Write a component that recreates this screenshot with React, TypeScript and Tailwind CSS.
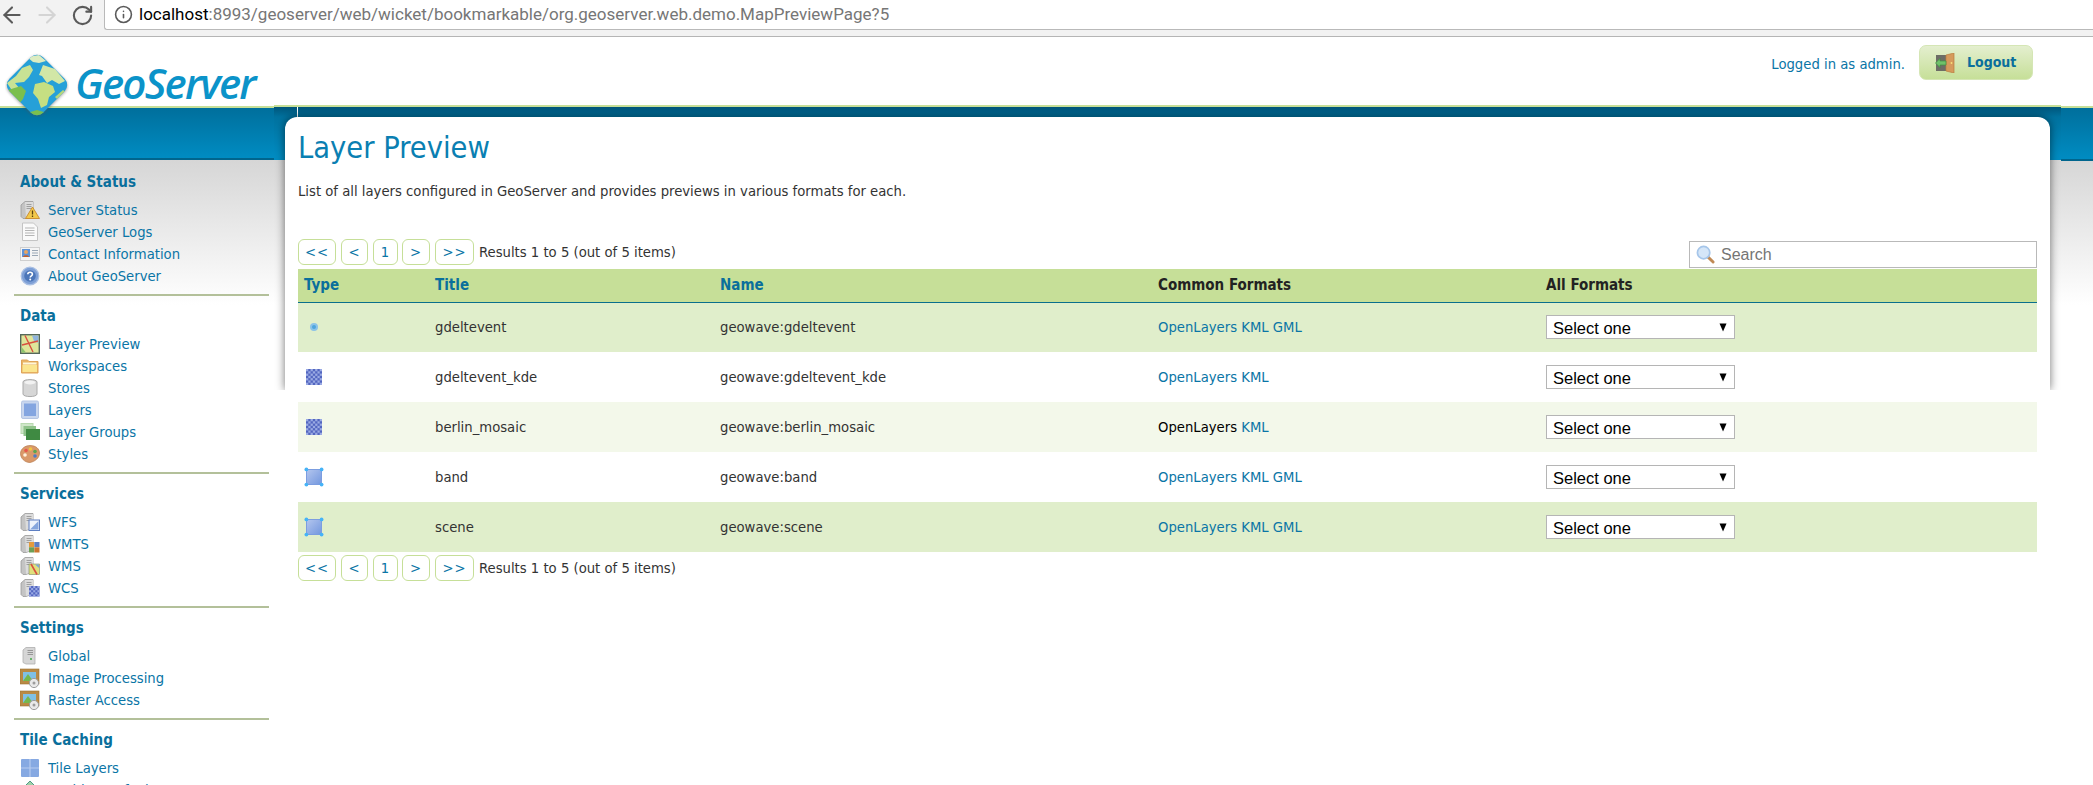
import React from 'react';
import { ArrowLeft, ArrowRight, RotateCw, Info } from 'lucide-react';

const Svg: React.FC<{ children: React.ReactNode; size?: number }> = ({ children, size = 20 }) => (
  <svg width={size} height={size} viewBox="0 0 20 20" className="shrink-0">
    {children}
  </svg>
);

const ServerBody = () => (
  <>
    <path d="M1 5 L5 1.5 H13 V16 L6 18.5 H3 L1 16.5Z" fill="#c4c4c4" stroke="#9a9a9a" strokeWidth="0.8" />
    <path d="M5 2 H13 V16 L6 18 Z" fill="#dcdcdc" />
    <path d="M6.5 4.5 H11.5 M6.5 6.5 H11.5 M6.5 8.5 H11.5" stroke="#999" strokeWidth="0.9" />
  </>
);

const ServerStatusIcon = () => (
  <Svg>
    <ServerBody />
    <path d="M12.5 7 L19.5 18.5 H5.5Z" fill="#f3c94a" stroke="#c8892a" strokeWidth="0.9" />
    <path d="M12.5 10.5 V14.5 M12.5 15.6 V17" stroke="#5a4210" strokeWidth="1.3" />
  </Svg>
);

const LogIcon = () => (
  <Svg>
    <path d="M2.5 1 H13.5 L17.5 5 V18.5 H2.5Z" fill="#fafafa" stroke="#c4c4c4" />
    <path d="M5 6 H14.5 M5 8.5 H14.5 M5 11 H14.5 M5 13.5 H14.5" stroke="#b5b5b5" />
  </Svg>
);

const ContactIcon = () => (
  <Svg>
    <rect x="0.5" y="3.5" width="19" height="13" fill="#f4f4f4" stroke="#cfcfcf" />
    <rect x="2" y="5" width="8" height="8" fill="#5e93d8" />
    <circle cx="6" cy="8" r="2" fill="#e8a561" />
    <path d="M3 13 C3 10.5 9 10.5 9 13Z" fill="#c0602e" />
    <path d="M12 6.5 H18 M12 9 H18 M12 11.5 H18" stroke="#9aa7b5" />
  </Svg>
);

const HelpIcon = () => (
  <Svg>
    <circle cx="10" cy="10" r="8.8" fill="#7d9fd6" stroke="#a9bfe3" strokeWidth="1.2" />
    <circle cx="10" cy="10" r="5.8" fill="#4c76b9" />
    <path d="M7.8 8.2 C7.8 5.6 12.4 5.6 12.4 8.2 C12.4 9.8 10.2 9.8 10.2 11.5" fill="none" stroke="#fff" strokeWidth="1.6" />
    <circle cx="10.2" cy="13.6" r="1" fill="#fff" />
  </Svg>
);

const MapIcon = () => (
  <Svg>
    <rect x="0.7" y="0.7" width="18.6" height="18.6" fill="#dfe69a" stroke="#55685a" strokeWidth="1.4" />
    <path d="M12 1.5 H18.5 V9 L14 7Z" fill="#8fb4de" />
    <path d="M1.5 13 L6 18.5 H1.5Z" fill="#8cc46c" />
    <path d="M5 1.5 L13 18 M2 11 L18 7" stroke="#d9503f" strokeWidth="1.4" />
  </Svg>
);

const FolderIcon = () => (
  <Svg>
    <path d="M1.5 4 H7.5 L9 5.5 H18 V17 H1.5Z" fill="#e9b566" stroke="#e0a458" />
    <path d="M2.5 9 H17 V16 H2.5Z" fill="#fbe58e" />
    <path d="M3 6.5 H16.5 V8.5 H3Z" fill="#fff6d9" />
  </Svg>
);

const StoreIcon = () => (
  <Svg>
    <path d="M3 4 C3 0.8 17 0.8 17 4 V16 C17 19.4 3 19.4 3 16Z" fill="#d6d6d6" stroke="#aaa" />
    <ellipse cx="10" cy="4.4" rx="5.5" ry="2" fill="#f2f2f2" />
  </Svg>
);

const LayerIcon = () => (
  <Svg>
    <rect x="1.5" y="1" width="17" height="17.5" rx="1.5" fill="#c9d6ee" stroke="#b5c5e3" />
    <rect x="4" y="3.5" width="12" height="12.5" fill="#84a5e0" />
  </Svg>
);

const GroupIcon = () => (
  <Svg>
    <rect x="1" y="1.5" width="12" height="10" fill="#cfe6c8" stroke="#b9d9b0" />
    <rect x="3.5" y="4" width="12.5" height="10" fill="#8fc28a" />
    <rect x="6" y="7" width="14" height="11" fill="#3f8a42" />
  </Svg>
);

const PaletteIcon = () => (
  <Svg>
    <path d="M10 1.5 C16 1.5 19.5 5 19.5 9 C19.5 14 15 17.5 10 18.5 C4.5 18.5 0.5 14 0.5 9.5 C0.5 5 5 1.5 10 1.5Z" fill="#d9996a" stroke="#b87a4c" strokeWidth="0.7" />
    <circle cx="6" cy="6.5" r="1.8" fill="#e8574c" />
    <circle cx="10.5" cy="5" r="1.8" fill="#f1c542" />
    <circle cx="15" cy="7.5" r="1.8" fill="#5aa650" />
    <circle cx="15" cy="12" r="1.8" fill="#4d7cc9" />
    <circle cx="5" cy="11" r="1.8" fill="#fff0dc" />
  </Svg>
);

const RasterCells: React.FC<{ x: number; y: number; n: number; step: number }> = ({ x, y, n, step }) => (
  <>
    <rect x={x} y={y} width={n * step} height={n * step} fill="#5366c0" />
    {Array.from({ length: n * n }).map((_, i) =>
      ((i % n) + Math.floor(i / n)) % 2 === 0 ? (
        <rect key={i} x={x + (i % n) * step} y={y + Math.floor(i / n) * step} width={step} height={step} fill="#9aaae4" />
      ) : null
    )}
  </>
);

const ServiceIcon: React.FC<{ kind: 'wfs' | 'wmts' | 'wms' | 'wcs' }> = ({ kind }) => (
  <Svg>
    <ServerBody />
    {kind === 'wfs' && (
      <>
        <rect x="9" y="8" width="10.5" height="10.5" fill="#eef3fb" stroke="#5e7fc2" />
        <path d="M10 17.5 L18.5 9 V17.5Z" fill="#86a6dd" />
      </>
    )}
    {kind === 'wmts' && (
      <>
        <rect x="9" y="8" width="5.2" height="5.2" fill="#e49a3c" />
        <rect x="14.3" y="8" width="5.2" height="5.2" fill="#5e7fc2" />
        <rect x="9" y="13.3" width="5.2" height="5.2" fill="#6d9f55" />
        <rect x="14.3" y="13.3" width="5.2" height="5.2" fill="#c9762f" />
      </>
    )}
    {kind === 'wms' && (
      <>
        <rect x="9" y="8" width="10.5" height="10.5" fill="#dfe07c" stroke="#7d8a6a" strokeWidth="0.6" />
        <path d="M11 8 L17 18.5" stroke="#d9503f" strokeWidth="1.6" />
        <path d="M15 8.5 H19 V12Z" fill="#7fa8dc" />
      </>
    )}
    {kind === 'wcs' && <RasterCells x={9} y={8} n={5} step={2.1} />}
  </Svg>
);

const GlobalIcon = () => (
  <Svg>
    <path d="M3 4 L6 1.5 H15 V18 H6 L3 16.5Z" fill="#d6d6d6" stroke="#aeaeae" strokeWidth="0.8" />
    <path d="M7.5 4.5 H13 M7.5 6.5 H13 M7.5 8.5 H13" stroke="#8f8f8f" strokeWidth="0.9" />
    <circle cx="11" cy="13" r="1" fill="#45a84a" />
  </Svg>
);

const PictureGearIcon = () => (
  <Svg>
    <rect x="0" y="1" width="19" height="15" fill="#b98a45" stroke="#9a7134" strokeWidth="0.6" />
    <rect x="3" y="4" width="13" height="9" fill="#7fc0e6" />
    <path d="M3 13 L8 6 L13 13Z" fill="#74b84e" />
    <circle cx="14" cy="15" r="4.6" fill="#e9e9e9" stroke="#9c9c9c" strokeWidth="1" />
    <circle cx="14" cy="15" r="1.5" fill="#9c9c9c" />
  </Svg>
);

const TileIcon = () => (
  <Svg>
    <rect x="1" y="1" width="18" height="18" rx="1" fill="#86a9e2" />
    <path d="M10 1 V19 M1 10 H19" stroke="#b6cbef" strokeWidth="1.2" />
  </Svg>
);

const CachingIcon = () => (
  <Svg>
    <path d="M10 1 L19 10 L10 19 L1 10Z" fill="#9ed2a8" stroke="#4d9a85" />
    <path d="M5.5 10 H14.5 M10 5.5 V14.5" stroke="#e6f5e8" strokeWidth="1.3" />
  </Svg>
);

const PointIcon = () => (
  <svg width="20" height="20" viewBox="0 0 20 20" className="shrink-0">
    <circle cx="10" cy="10" r="4" fill="#8cc3e8" />
    <circle cx="10" cy="10" r="2" fill="#4ea5dd" />
  </svg>
);

const RasterIcon = () => (
  <svg width="20" height="20" viewBox="0 0 20 20" className="shrink-0">
    <RasterCells x={2} y={2} n={7} step={16 / 7} />
  </svg>
);

const PolygonIcon = () => (
  <svg width="20" height="20" viewBox="0 0 20 20" className="shrink-0">
    <defs>
      <linearGradient id="polygon-fill" x1="0" y1="0" x2="1" y2="1">
        <stop offset="0" stopColor="#b4c6ee" />
        <stop offset="1" stopColor="#7397de" />
      </linearGradient>
    </defs>
    <rect x="2.5" y="2.5" width="15" height="15" fill="url(#polygon-fill)" stroke="#7c9de0" />
    {[2.4, 17.6].map((cx) =>
      [2.4, 17.6].map((cy) => <circle key={`${cx}-${cy}`} cx={cx} cy={cy} r="1.9" fill="#45b3f7" />)
    )}
  </svg>
);

const SearchGlass = () => (
  <svg width="19" height="19" viewBox="0 0 20 20" className="shrink-0">
    <path d="M12.5 12.5 L18 18" stroke="#c08a55" strokeWidth="3" strokeLinecap="round" />
    <circle cx="8" cy="8" r="6.5" fill="#d5e6f8" stroke="#a6c6ea" strokeWidth="1.8" />
  </svg>
);

const DoorIcon = () => (
  <svg width="20" height="20" viewBox="0 0 20 20" className="shrink-0">
    <rect x="1" y="2" width="15" height="16" fill="#6d6d66" />
    <path d="M11 2 L19 0 V20 L11 18Z" fill="#d69a5c" stroke="#b97b3e" strokeWidth="0.7" />
    <circle cx="16.5" cy="10" r="0.9" fill="#f7e07a" />
    <path d="M0.5 10 L5 5.5 V8 H11 V12 H5 V14.5Z" fill="#6fc06a" stroke="#3f8f3f" strokeWidth="0.7" />
  </svg>
);

const Logo = () => (
  <svg width="64" height="64" viewBox="0 0 64 64" className="shrink-0">
    <defs>
      <clipPath id="logo-diamond">
        <rect x="8" y="8" width="48" height="48" rx="9" transform="rotate(45 32 32)" />
      </clipPath>
      <filter id="logo-shadow" x="-20%" y="-20%" width="140%" height="140%">
        <feGaussianBlur stdDeviation="1.4" />
      </filter>
    </defs>
    <rect x="8" y="9" width="48" height="48" rx="9" transform="rotate(45 32 33)" fill="#555" opacity="0.55" filter="url(#logo-shadow)" />
    <g clipPath="url(#logo-diamond)">
      <rect width="64" height="64" fill="#26a0d8" />
      <path d="M22 4 L34 2 L41 8 L34 10 L28 9Z" fill="#dcecc0" />
      <path d="M38 12 L50 16 L60 28 L54 31 L47 27 L42 30 L37 23 L34 22Z" fill="#d2e7a6" />
      <path d="M2 30 L11 23 L17 15 L25 12 L28 17 L24 24 L19 29 L10 30 L15 36 L6 36Z" fill="#c8e294" />
      <path d="M3 37 L16 33 L21 38 L18 46 L12 53 L6 46Z" fill="#7bbf4d" />
      <path d="M30 31 L39 29 L48 33 L50 39 L44 44 L42 52 L36 55 L33 46 L28 40Z" fill="#c6df82" />
      <path d="M50 44 L58 37 L62 40 L54 48Z" fill="#b6d878" />
      <path d="M22 60 L32 57 L42 60 L32 66Z" fill="#7bbf4d" />
    </g>
  </svg>
);

const sections: { title: string; items: { label: string; icon: React.ReactNode }[] }[] = [
  {
    title: 'About & Status',
    items: [
      { label: 'Server Status', icon: <ServerStatusIcon /> },
      { label: 'GeoServer Logs', icon: <LogIcon /> },
      { label: 'Contact Information', icon: <ContactIcon /> },
      { label: 'About GeoServer', icon: <HelpIcon /> },
    ],
  },
  {
    title: 'Data',
    items: [
      { label: 'Layer Preview', icon: <MapIcon /> },
      { label: 'Workspaces', icon: <FolderIcon /> },
      { label: 'Stores', icon: <StoreIcon /> },
      { label: 'Layers', icon: <LayerIcon /> },
      { label: 'Layer Groups', icon: <GroupIcon /> },
      { label: 'Styles', icon: <PaletteIcon /> },
    ],
  },
  {
    title: 'Services',
    items: [
      { label: 'WFS', icon: <ServiceIcon kind="wfs" /> },
      { label: 'WMTS', icon: <ServiceIcon kind="wmts" /> },
      { label: 'WMS', icon: <ServiceIcon kind="wms" /> },
      { label: 'WCS', icon: <ServiceIcon kind="wcs" /> },
    ],
  },
  {
    title: 'Settings',
    items: [
      { label: 'Global', icon: <GlobalIcon /> },
      { label: 'Image Processing', icon: <PictureGearIcon /> },
      { label: 'Raster Access', icon: <PictureGearIcon /> },
    ],
  },
  {
    title: 'Tile Caching',
    items: [
      { label: 'Tile Layers', icon: <TileIcon /> },
      { label: 'Caching Defaults', icon: <CachingIcon /> },
    ],
  },
];

const rows = [
  { icon: <PointIcon />, title: 'gdeltevent', name: 'geowave:gdeltevent', gml: true, bg: 'bg-[#e0eecb]' },
  { icon: <RasterIcon />, title: 'gdeltevent_kde', name: 'geowave:gdeltevent_kde', gml: false, bg: 'bg-white' },
  { icon: <RasterIcon />, title: 'berlin_mosaic', name: 'geowave:berlin_mosaic', gml: false, bg: 'bg-[#f3f8ea]', hover: true },
  { icon: <PolygonIcon />, title: 'band', name: 'geowave:band', gml: true, bg: 'bg-white' },
  { icon: <PolygonIcon />, title: 'scene', name: 'geowave:scene', gml: true, bg: 'bg-[#e0eecb]' },
];

const Pager = () => (
  <div className="flex items-center h-[26px] text-[#333]">
    {[
      { t: '<<', w: 'w-[38px] mr-[5px]' },
      { t: '<', w: 'w-[27px] mr-[5px]' },
      { t: '1', w: 'w-[25px] mr-[4px]' },
      { t: '>', w: 'w-[28px] mr-[5px]' },
      { t: '>>', w: 'w-[39px] mr-[5px]' },
    ].map((b) => (
      <a
        key={b.t}
        className={`${b.w} h-[26px] flex items-center justify-center border border-[#c6df98] rounded-[6px] bg-white text-[#0a75a6] tracking-[1px]`}
      >
        {b.t}
      </a>
    ))}
    <span>Results 1 to 5 (out of 5 items)</span>
  </div>
);

const SelectOne = () => (
  <div className="relative w-[189px] h-[24px]">
    <select className="appearance-none w-full h-full bg-white border border-[#b5b5b5] pl-[6px] pb-[4px] text-[16.5px] text-black font-['Liberation_Sans',sans-serif] outline-none">
      <option>Select one</option>
    </select>
    <svg width="8" height="9" viewBox="0 0 8 9" className="absolute right-[8px] top-[8px] pointer-events-none">
      <path d="M0.5 0.5 H7.5 L4 8.5Z" fill="#000" />
    </svg>
  </div>
);

const App: React.FC = () => {
  return (
    <div className="w-[2093px] h-[785px] overflow-hidden bg-white text-[14.7px] text-[#333] font-['DejaVu_Sans_Condensed','Noto_Sans',sans-serif]">
      {/* browser toolbar */}
      <div className="flex h-[37px] bg-[#f2f2f2] border-b border-[#b5b5b5]">
        <div className="w-[104px] h-[30px] flex items-center text-[#5a5a5a]">
          <ArrowLeft size={26} strokeWidth={1.9} className="-ml-[1px] shrink-0" />
          <ArrowRight size={26} strokeWidth={1.9} className="ml-[9px] shrink-0 text-[#d4d4d4]" />
          <RotateCw size={23} strokeWidth={2.2} className="ml-[11px] shrink-0" />
        </div>
        <div className="flex-1 h-[30px] flex items-center bg-white border-l border-b border-[#b9b9b9] rounded-bl-[3px] pl-[9px] gap-[6px] text-[17px] text-[#767676] font-['Roboto',sans-serif]">
          <Info size={19} strokeWidth={2} className="text-[#5a5a5a]" />
          <span>
            <span className="text-black">localhost</span>:8993/geoserver/web/wicket/bookmarkable/org.geoserver.web.demo.MapPreviewPage?5
          </span>
        </div>
      </div>

      {/* header */}
      <div className="flex h-[68px]">
        <div className="relative z-10 flex items-start pl-[5px] pt-[16px]">
          <Logo />
          <span className="ml-[6px] mt-[2px] text-[42px] leading-[56px] font-semibold italic tracking-[-1.8px] text-[#0b93c9] font-['Open_Sans',sans-serif]">
            GeoServer
          </span>
        </div>
        <div className="ml-auto flex items-start pt-[8px] pr-[60px]">
          <span className="mt-[8px] mr-[14px] text-[#0a75a6]">Logged in as admin.</span>
          <a className="w-[114px] h-[35px] flex items-center pl-[15px] gap-[12px] rounded-[7px] border border-[#d5e6b5] bg-[linear-gradient(#e4efcf,#c6df98)] font-bold text-[14px] text-[#0a6f9c]">
            <DoorIcon />
            Logout
          </a>
        </div>
      </div>

      {/* blue band */}
      <div className="flex h-[55px]">
        <div className="w-[274px] pt-px bg-white">
          <div className="h-[54px] border-t-2 border-b-2 border-t-[#c6df98] border-b-[#00658d] bg-[linear-gradient(#006f9c,#008cc2)]" />
        </div>
        <div className="flex-1 border-t-2 border-[#c6df98] bg-[linear-gradient(#00557a,#00729f_10px,#008cc2_50px)]">
          <div className="ml-[23px] w-px h-[10px] bg-white" />
        </div>
        <div className="w-[32px] pt-px bg-white">
          <div className="h-[55px] border-t-2 border-b-2 border-t-[#c6df98] border-b-[#00658d] bg-[linear-gradient(#006f9c,#008cc2)]" />
        </div>
      </div>

      {/* body */}
      <div className="flex bg-[linear-gradient(#d6d6d6,#ffffff_145px)]">
        <nav className="w-[285px] pt-[2px] shrink-0">
          {sections.map((s, i) => (
            <div
              key={s.title}
              className={`ml-[14px] w-[255px] pl-[6px] pt-[10px] pb-[7px] ${
                i < sections.length - 1 ? 'border-b-2 border-[#b3c09a]' : ''
              }`}
            >
              <h3 className="h-[20px] mb-[7px] leading-[20px] text-[15px] font-bold text-[#0a6f9c]">{s.title}</h3>
              {s.items.map((it) => (
                <a key={it.label} className="h-[22px] flex items-center gap-[8px] text-[#0a75a6]">
                  {it.icon}
                  {it.label}
                </a>
              ))}
            </div>
          ))}
        </nav>

        <main className="relative isolate flex-1 mr-[43px] -mt-[43px] h-[668px] px-[13px] rounded-t-[12px] bg-white">
          <div className="absolute inset-x-0 top-0 h-[273px] rounded-t-[12px] shadow-[0_0_10px_rgba(0,0,0,0.55)] [clip-path:inset(-20px_-20px_0_-20px)] -z-10" />
          <h1 className="h-[40px] pt-[11px] box-content leading-[40px] text-[30.5px] text-[#0a7fb2]">Layer Preview</h1>
          <p className="mt-[13px] h-[20px] leading-[20px]">
            List of all layers configured in GeoServer and provides previews in various formats for each.
          </p>
          <div className="mt-[38px] flex h-[30px]">
            <Pager />
            <div className="ml-auto w-[348px] h-[27px] mt-[2px] flex items-center gap-[6px] pl-[6px] border border-[#b9b9b9] bg-white text-[16px] text-[#757575] font-['Liberation_Sans',sans-serif]">
              <SearchGlass />
              Search
            </div>
          </div>

          <table className="w-full table-fixed border-collapse">
            <colgroup>
              <col className="w-[131px]" />
              <col className="w-[285px]" />
              <col className="w-[438px]" />
              <col className="w-[388px]" />
              <col />
            </colgroup>
            <thead>
              <tr className="h-[33px] bg-[#c6df98] border-b border-[#0a6f8c] font-bold text-left text-[15px]">
                <th className="pl-[6px] pr-[6px] text-[#0a6f9c]">Type</th>
                <th className="px-[6px] text-[#0a6f9c]">Title</th>
                <th className="px-[6px] text-[#0a6f9c]">Name</th>
                <th className="px-[6px] text-[#222]">Common Formats</th>
                <th className="px-[6px] text-[#222]">All Formats</th>
              </tr>
            </thead>
            <tbody>
              {rows.map((r) => (
                <tr key={r.title} className={`h-[50px] ${r.bg}`}>
                  <td className="px-[6px]">{r.icon}</td>
                  <td className="px-[6px]">{r.title}</td>
                  <td className="px-[6px]">{r.name}</td>
                  <td className="px-[6px] text-[#0a75a6]">
                    <a className={r.hover ? 'text-black' : ''}>OpenLayers</a> KML{r.gml ? ' GML' : ''}
                  </td>
                  <td className="px-[6px]">
                    <SelectOne />
                  </td>
                </tr>
              ))}
            </tbody>
          </table>
          <div className="mt-[3px]">
            <Pager />
          </div>
        </main>
      </div>
    </div>
  );
};

export default App;
